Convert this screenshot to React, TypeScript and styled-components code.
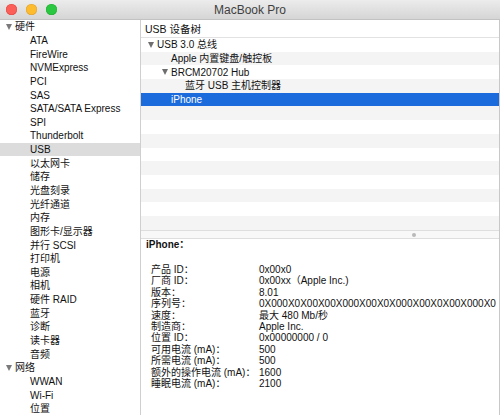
import React from "react";
import styled, { createGlobalStyle } from "styled-components";

const Global = createGlobalStyle`
  html, body { margin: 0; padding: 0; background: #ffffff; }
  body { font-family: "Liberation Sans", "Noto Sans CJK SC", sans-serif; -webkit-font-smoothing: antialiased; }
  #root { width: 500px; height: 415px; }
`;

const Window = styled.div`
  width: 500px;
  height: 415px;
  display: flex;
  flex-direction: column;
  overflow: hidden;
  background: #fff;
  font-size: 10px;
  color: #111111;
`;

const TitleBar = styled.div`
  position: relative;
  height: 19px;
  flex: none;
  display: flex;
  align-items: center;
  justify-content: center;
  background: linear-gradient(#ececec, #d5d5d5);
  border-bottom: 1px solid #c2c2c2;
`;

const Lights = styled.div`
  position: absolute;
  left: 6px;
  top: 4px;
  display: flex;
  gap: 9px;
`;

const Light = styled.span<{ $c: string; $b: string }>`
  width: 11px;
  height: 11px;
  border-radius: 50%;
  background: ${(p) => p.$c};
  box-shadow: inset 0 0 0 0.5px ${(p) => p.$b};
`;

const Title = styled.div`
  font-size: 12px;
  color: #3f3f3f;
  margin-top: 1px;
`;

const Body = styled.div`
  flex: 1;
  display: flex;
  min-height: 0;
`;

const Sidebar = styled.div`
  width: 140px;
  flex: none;
  border-right: 1px solid #cfcfcf;
  display: flex;
  flex-direction: column;
`;

const SideRow = styled.div<{ $indent: number; $sel?: boolean }>`
  height: 13.65px;
  flex: none;
  display: flex;
  align-items: center;
  padding-left: ${(p) => p.$indent}px;
  background: ${(p) => (p.$sel ? "#dcdcdc" : "transparent")};
  white-space: nowrap;
  line-height: 13px;
`;

const Tri = styled.span<{ $color?: string }>`
  width: 0;
  height: 0;
  border-left: 3.5px solid transparent;
  border-right: 3.5px solid transparent;
  border-top: 6px solid ${(p) => p.$color || "#7a7a7a"};
  margin-right: 3px;
  flex: none;
`;

const Right = styled.div`
  flex: 1;
  display: flex;
  flex-direction: column;
  border-right: 1px solid #c8c8c8;
  min-width: 0;
`;

const Header = styled.div`
  height: 17px;
  flex: none;
  display: flex;
  align-items: center;
  padding-left: 4px;
  border-bottom: 1px solid #e2e2e2;
  font-size: 10.5px;
`;

const Tree = styled.div`
  height: 192px;
  flex: none;
  display: flex;
  flex-direction: column;
  overflow: hidden;
`;

const TreeRow = styled.div<{ $indent: number; $odd: boolean; $sel?: boolean }>`
  height: 13.7px;
  flex: none;
  display: flex;
  align-items: center;
  padding-left: ${(p) => p.$indent}px;
  background: ${(p) => (p.$sel ? "#1b6bdc" : p.$odd ? "#f4f4f5" : "#ffffff")};
  color: ${(p) => (p.$sel ? "#ffffff" : "#111111")};
  white-space: nowrap;
  line-height: 13px;
`;

const Splitter = styled.div`
  height: 7px;
  flex: none;
  border-top: 1px solid #dedede;
  border-bottom: 1px solid #dedede;
  background: #f8f8f8;
  display: flex;
  align-items: center;
  justify-content: center;
`;

const Dot = styled.span`
  width: 4px;
  height: 4px;
  border-radius: 50%;
  background: #b9b9b9;
  margin-left: 187px;
`;

const Detail = styled.div`
  flex: 1;
  padding: 0 0 0 5px;
`;

const DetailTitle = styled.div`
  font-weight: bold;
  height: 12px;
  line-height: 12px;
  margin-bottom: 13px;
`;

const Grid = styled.div`
  display: grid;
  grid-template-columns: 108px 1fr;
  grid-auto-rows: 11.4px;
  padding-left: 5px;
  line-height: 11.4px;
  white-space: nowrap;
`;

const Cell = styled.div`
  overflow: visible;
`;

type Side = { label: string; level: number; open?: boolean; sel?: boolean };

const sideItems: Side[] = [
  { label: "硬件", level: 0, open: true },
  { label: "ATA", level: 1 },
  { label: "FireWire", level: 1 },
  { label: "NVMExpress", level: 1 },
  { label: "PCI", level: 1 },
  { label: "SAS", level: 1 },
  { label: "SATA/SATA Express", level: 1 },
  { label: "SPI", level: 1 },
  { label: "Thunderbolt", level: 1 },
  { label: "USB", level: 1, sel: true },
  { label: "以太网卡", level: 1 },
  { label: "储存", level: 1 },
  { label: "光盘刻录", level: 1 },
  { label: "光纤通道", level: 1 },
  { label: "内存", level: 1 },
  { label: "图形卡/显示器", level: 1 },
  { label: "并行 SCSI", level: 1 },
  { label: "打印机", level: 1 },
  { label: "电源", level: 1 },
  { label: "相机", level: 1 },
  { label: "硬件 RAID", level: 1 },
  { label: "蓝牙", level: 1 },
  { label: "诊断", level: 1 },
  { label: "读卡器", level: 1 },
  { label: "音频", level: 1 },
  { label: "网络", level: 0, open: true },
  { label: "WWAN", level: 1 },
  { label: "Wi-Fi", level: 1 },
  { label: "位置", level: 1 },
];

type Node = { label: string; indent: number; open?: boolean; sel?: boolean };

const treeItems: Node[] = [
  { label: "USB 3.0 总线", indent: 7, open: true },
  { label: "Apple 内置键盘/触控板", indent: 30 },
  { label: "BRCM20702 Hub", indent: 21, open: true },
  { label: "蓝牙 USB 主机控制器", indent: 44 },
  { label: "iPhone", indent: 30, sel: true },
];

const details: [string, string][] = [
  ["产品 ID：", "0x00x0"],
  ["厂商 ID：", "0x00xx（Apple Inc.)"],
  ["版本：", "8.01"],
  ["序列号：", "0X000X0X00X00X000X00X0X000X00X0X00X000X0"],
  ["速度：", "最大 480 Mb/秒"],
  ["制造商：", "Apple Inc."],
  ["位置 ID：", "0x00000000 / 0"],
  ["可用电流 (mA)：", "500"],
  ["所需电流 (mA)：", "500"],
  ["额外的操作电流 (mA)：", "1600"],
  ["睡眠电流 (mA)：", "2100"],
];

export default function App() {
  const rows = Array.from({ length: 14 }, (_, i) => treeItems[i]);
  return (
    <>
      <Global />
      <Window>
        <TitleBar>
          <Lights>
            <Light $c="#fc5f57" $b="#df4744" />
            <Light $c="#fdbc2e" $b="#de9f34" />
            <Light $c="#29c840" $b="#27aa35" />
          </Lights>
          <Title>MacBook Pro</Title>
        </TitleBar>
        <Body>
          <Sidebar>
            {sideItems.map((s, i) => (
              <SideRow key={i} $indent={s.level === 0 ? 6 : 30} $sel={s.sel}>
                {s.open && <Tri />}
                {s.label}
              </SideRow>
            ))}
          </Sidebar>
          <Right>
            <Header>USB 设备树</Header>
            <Tree>
              {rows.map((n, i) => (
                <TreeRow key={i} $indent={n ? n.indent : 0} $odd={i % 2 === 1} $sel={n?.sel}>
                  {n?.open && <Tri $color="#6e6e6e" />}
                  {n?.label}
                </TreeRow>
              ))}
            </Tree>
            <Splitter>
              <Dot />
            </Splitter>
            <Detail>
              <DetailTitle>iPhone：</DetailTitle>
              <Grid>
                {details.map(([k, v], i) => (
                  <React.Fragment key={i}>
                    <Cell>{k}</Cell>
                    <Cell>{v}</Cell>
                  </React.Fragment>
                ))}
              </Grid>
            </Detail>
          </Right>
        </Body>
      </Window>
    </>
  );
}
